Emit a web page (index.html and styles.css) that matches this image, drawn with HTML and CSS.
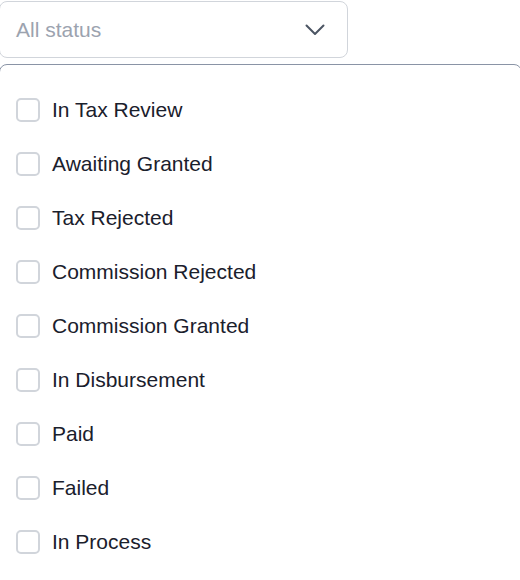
FILE: index.html
```html
<!DOCTYPE html>
<html>
<head>
<meta charset="utf-8">
<link rel="stylesheet" href="styles.css">
</head>
<body>
<div class="wrap">
  <div class="select">
    <span class="placeholder">All status</span>
    <svg class="chev" width="20" height="12" viewBox="0 0 20 12"><path d="M1.5 1.5 L10 10 L18.5 1.5" fill="none" stroke="#4b5563" stroke-width="2" stroke-linecap="round" stroke-linejoin="round"/></svg>
  </div>
  <div class="panel">
    <label class="opt"><span class="box"></span><span class="txt">In Tax Review</span></label>
    <label class="opt"><span class="box"></span><span class="txt">Awaiting Granted</span></label>
    <label class="opt"><span class="box"></span><span class="txt">Tax Rejected</span></label>
    <label class="opt"><span class="box"></span><span class="txt">Commission Rejected</span></label>
    <label class="opt"><span class="box"></span><span class="txt">Commission Granted</span></label>
    <label class="opt"><span class="box"></span><span class="txt">In Disbursement</span></label>
    <label class="opt"><span class="box"></span><span class="txt">Paid</span></label>
    <label class="opt"><span class="box"></span><span class="txt">Failed</span></label>
    <label class="opt"><span class="box"></span><span class="txt">In Process</span></label>
  </div>
</div>
</body>
</html>
```
FILE: styles.css
```css
html, body {
  margin: 0;
  padding: 0;
  background: #ffffff;
  overflow: hidden;
}
body {
  font-family: "Liberation Sans", Arial, sans-serif;
  width: 520px;
  height: 580px;
}
.wrap {
  margin-left: -1px;
  padding-top: 1px;
  display: flex;
  flex-direction: column;
  gap: 6px;
}
.select {
  box-sizing: border-box;
  width: 349px;
  height: 57px;
  border: 1px solid #d1d5db;
  border-radius: 8px;
  display: flex;
  align-items: center;
  justify-content: space-between;
  padding: 0 22px 0 16px;
}
.placeholder {
  color: #9ca3af;
  font-size: 21px;
}
.chev {
  display: block;
  margin-top: 1px;
}
.panel {
  box-sizing: border-box;
  width: 523px;
  height: 530px;
  border: 1px solid #8a94a6;
  border-radius: 8px;
  padding: 18px 0 0 16px;
  display: flex;
  flex-direction: column;
}
.opt {
  height: 54px;
  display: flex;
  align-items: center;
  gap: 12px;
}
.box {
  box-sizing: border-box;
  width: 24px;
  height: 24px;
  border: 2px solid #d1d5db;
  border-radius: 5px;
  flex: none;
}
.txt {
  font-size: 21px;
  color: #1a202c;
}
```
